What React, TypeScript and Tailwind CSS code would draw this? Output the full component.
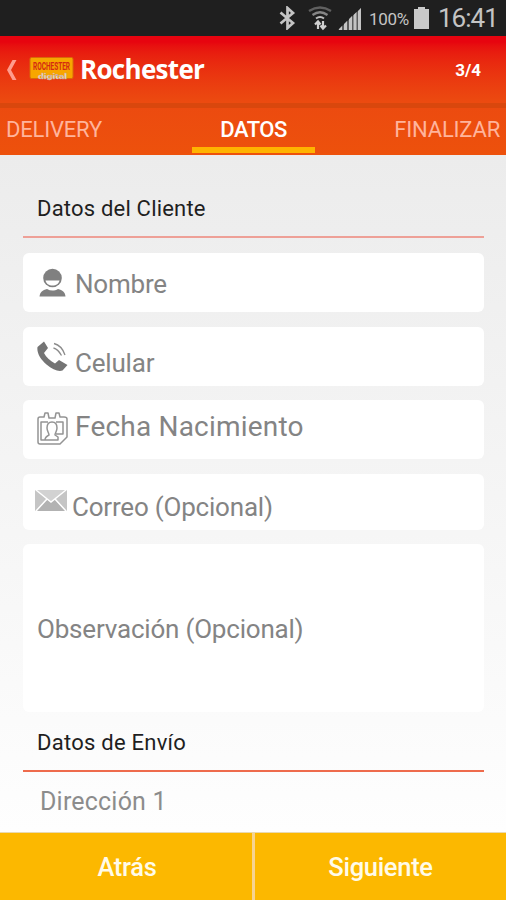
import type { ReactNode } from "react";

function StatusBar() {
  return (
    <div className="flex h-9 shrink-0 items-center bg-[#1f1f1f] pl-[278px] text-[#c4c4c4]">
      <svg width="19" height="24" viewBox="0 0 19 24" fill="none" stroke="#c4c4c4" strokeWidth="2.7">
        <path d="M2.5 6.5 15 17l-5.5 5V2L15 7 2.5 17.5" />
      </svg>
      <svg className="ml-[11px]" width="24" height="26" viewBox="0 0 24 26" fill="none">
        <path d="M1 6Q12-1 23 6" stroke="#606060" strokeWidth="2.4" />
        <path d="M4.5 10Q12 4.5 19.5 10" stroke="#858585" strokeWidth="2.2" />
        <path d="M8 13.5Q12 10.5 16 13.5" stroke="#bdbdbd" strokeWidth="2" />
        <path d="M10 24v-7M7 19.500l3-3 2.500 3M15 16v7M12.500 20.500l2.500 3 3-3" stroke="#d0d0d0" strokeWidth="2.200" />
      </svg>
      <svg className="mt-[1px] ml-[6px]" width="24" height="24" viewBox="0 0 24 24">
        <path d="M0 23 23 1v22z" fill="#5b5b5b" />
        <path d="M1 23v-1l3-3v4zM6 23v-6l3-3v9zM11 23V12l3-3v14zM15.500 23V8l3-3v18zM20 23V4l3-3v22z" fill="#c4c4c4" />
      </svg>
      <span className="ml-[7px] w-[40px] pt-[1px] text-[17px] leading-6 tracking-[-0.3px]">100%</span>
      <svg className="mt-[-1px] ml-[4px]" width="18" height="24" viewBox="0 0 18 24" fill="#c9c9c9">
        <path d="M5 1h7v2h4v20H1V3h4z" />
      </svg>
      <span className="ml-[7px] text-[26px] leading-9 tracking-[-1px]">16:41</span>
    </div>
  );
}

function BrandLogo() {
  return (
    <svg width="46" height="28" viewBox="0 0 46 28">
      <rect x="1" y="0.5" width="43" height="21" rx="1.500" fill="#f7a600" stroke="#d86b08" strokeWidth="1" />
      <text x="4" y="13" textLength="37" lengthAdjust="spacingAndGlyphs" fontFamily="Roboto, sans-serif" fontSize="10" fontWeight="700" fill="#d42a12">
        ROCHESTER
      </text>
      <text x="9" y="22" textLength="29" lengthAdjust="spacingAndGlyphs" fontFamily="Roboto, sans-serif" fontSize="8" fontWeight="700" fill="#eee6df" stroke="#c9a08a" strokeWidth="0.3">
        digital
      </text>
    </svg>
  );
}

function Header() {
  return (
    <header className="flex h-[119px] shrink-0 flex-col bg-linear-to-b from-[#e7040f] from-5% via-[#ec4a10] via-55% to-[#ed510c] to-100%">
      <div className="flex h-[67px] items-center pr-[25px] pl-[6px] text-white">
        <svg width="11" height="22" viewBox="0 0 11 22" fill="#ff9c8d">
          <path d="M6.500 1h4L5 11l5.500 10h-4L1 11z" />
        </svg>
        <div className="ml-[12px] pt-[3px]">
          <BrandLogo />
        </div>
        <h1 className="-mt-[2px] ml-[5px] font-['Open_Sans',sans-serif] text-[26px] leading-8 font-bold tracking-[-0.7px]">Rochester</h1>
        <span className="ml-auto pt-[2px] text-[17px] font-bold">3/4</span>
      </div>
      <div className="h-[5px] bg-[#d9470d]" />
      <nav className="grid flex-1 grid-cols-[192px_123px_1fr] text-[22px] leading-[44px] text-[#ffb49c]">
        <span className="pl-[6px] tracking-[-0.2px]">DELIVERY</span>
        <span className="mb-[2px] flex flex-col border-b-[6px] border-[#ffb300] text-center font-medium tracking-[-0.5px] text-white">
          <span className="h-[39px]">DATOS</span>
        </span>
        <span className="pr-[6px] text-right tracking-[-0.2px]">FINALIZAR</span>
      </nav>
    </header>
  );
}

function PersonIcon() {
  return (
    <svg width="28" height="30" viewBox="0 0 28 30" fill="#808080">
      <circle cx="13.500" cy="10" r="9.300" />
      <path d="M6.500 12.500h14c-.5 3-3.500 5-7 5s-6.500-2-7-5z" fill="#fff" />
      <path d="M.5 28.500c.5-4.500 3-6.500 7.500-7.500 3.500 2 7.500 2 11 0 4.500 1 7 3 7.500 7.500z" />
    </svg>
  );
}

function PhoneIcon() {
  return (
    <svg width="31" height="32" viewBox="0 0 31 32">
      <path d="M.5 6 7 .5l4 6.500-4 5c2 4 6 8 11 10.500l4-3.500 8.500 5-5 5.500c-4 1.500-10-1-16-6S-.5 12 .5 6z" fill="#747474" />
      <path d="M17 2.500c6 1.500 9 5.500 11 11.500M16.500 7c4 1 6 4 8 7.500" fill="none" stroke="#8b8b8b" strokeWidth="1.300" />
    </svg>
  );
}

function CalendarIcon() {
  return (
    <svg width="32" height="35" viewBox="0 0 32 35" fill="none" stroke="#949494" strokeWidth="1.500" strokeLinejoin="round">
      <path d="M1 8c0-1 1-2 2-2h4l1-4h3l1 5h6l1-5h3l1 4h4c2 0 3 1 3 2v18l-7 7H3c-1 0-2-1-2-2z" />
      <path d="M11 11H4v18h4c0-3 2-4 4-5 0-2-2-4-2-7 0-4 1-6 5-6s5 2 5 6c0 3-2 5-2 7l3 2v3H8M19 11h7v12h-7" />
    </svg>
  );
}

function MailIcon() {
  return (
    <svg width="34" height="24" viewBox="0 0 34 24">
      <rect x="1" y="1" width="32" height="21" rx="1" fill="#c5c5c5" />
      <path d="M2 22 13 11h8l11 11z" fill="#b2b2b2" />
      <path d="M3 1h28L17 13z" fill="#d2d2d2" />
      <path d="m2 1 15 12L32 1M2 22l11-12M32 22 21 10" fill="none" stroke="#fff" strokeWidth="1.500" />
    </svg>
  );
}

function Field({ className, icon, children }: { className: string; icon?: ReactNode; children: ReactNode }) {
  return (
    <div className={`flex w-[461px] shrink-0 rounded-[6px] bg-white text-[26px] leading-8 tracking-[-0.2px] text-[#848484] ${className}`}>
      {icon}
      {children}
    </div>
  );
}

export default function App() {
  return (
    <div className="flex h-[900px] w-[506px] flex-col overflow-hidden font-[Roboto,sans-serif]">
      <StatusBar />
      <Header />
      <main className="flex h-[677px] shrink-0 flex-col overflow-hidden bg-linear-to-b from-[#ececec] to-[#fefefe] pl-[23px]">
        <h2 className="h-[81px] shrink-0 pt-[38px] pl-[14px] text-[22px] leading-8 tracking-[0.2px] text-[#1f1f1f]">Datos del Cliente</h2>
        <div className="h-[2px] w-[461px] shrink-0 bg-[#eea097]" />
        <Field className="mt-[15px] h-[59px] pt-[15px] pl-[16px]" icon={<PersonIcon />}>
          <span className="ml-[8px]">Nombre</span>
        </Field>
        <Field className="mt-[15px] h-[59px] pt-[14px] pl-[14px]" icon={<PhoneIcon />}>
          <span className="ml-[7px] pt-[6px]">Celular</span>
        </Field>
        <Field className="mt-[14px] h-[59px] pt-[11px] pl-[14px]" icon={<CalendarIcon />}>
          <span className="ml-[6px] text-[28px] tracking-[0.2px]">Fecha Nacimiento</span>
        </Field>
        <Field className="mt-[15px] h-[56px] pt-[15px] pl-[11px]" icon={<MailIcon />}>
          <span className="ml-[4px] pt-[2px]">Correo (Opcional)</span>
        </Field>
        <Field className="mt-[14px] h-[168px] items-center pl-[14px]">
          <span className="pt-[2px]">Observación (Opcional)</span>
        </Field>
        <h2 className="h-[58px] shrink-0 pt-[15px] pl-[14px] text-[22px] leading-8 tracking-[0.25px] text-[#1f1f1f]">Datos de Envío</h2>
        <div className="h-[2px] w-[461px] shrink-0 bg-[#ee6b4c]" />
        <p className="mt-[14px] h-[32px] shrink-0 pl-[17px] text-[25px] leading-8 tracking-[0.2px] text-[#8c8c8c]">Dirección 1</p>
      </main>
      <footer className="grid h-[68px] grid-cols-[252px_1fr] gap-[3px] border-t border-[#e9d9b0] bg-[#f6d391] text-[25.5px] leading-[69px] font-medium text-[#fffbe9]">
        <button type="button" className="bg-[#fcb800] pl-[2px] tracking-[-0.3px]">Atrás</button>
        <button type="button" className="bg-[#fcb800] tracking-[-0.3px]">Siguiente</button>
      </footer>
    </div>
  );
}
